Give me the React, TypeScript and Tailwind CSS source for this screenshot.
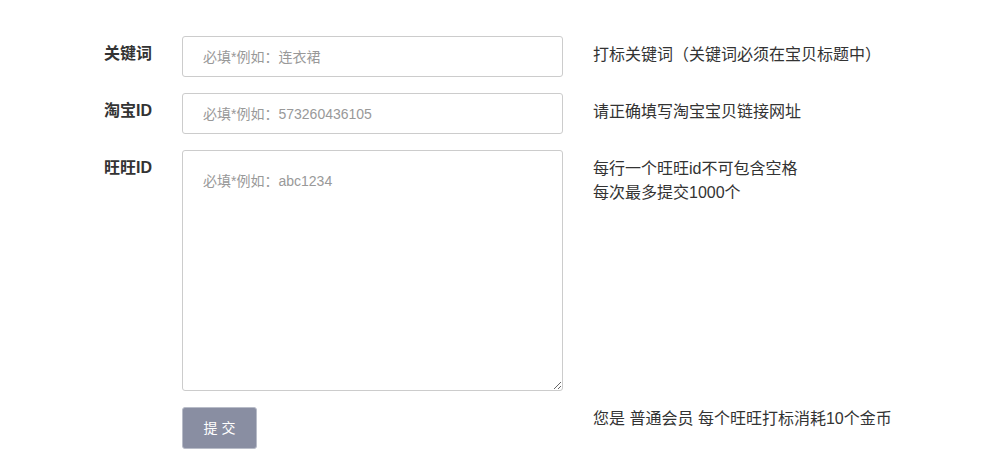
export default function App() {
  const font = { fontFamily: '"Liberation Sans", "Noto Sans CJK SC", sans-serif' };
  return (
    <div className="min-h-screen bg-white text-[#333]" style={font}>
      <div className="grid grid-cols-[152px_381px_auto] gap-x-[30px] gap-y-[16px] pt-[36px]">
        <div className="pt-[6px] text-right text-[16px] leading-6 font-bold">关键词</div>
        <input
          className="h-[41px] rounded-[3px] border border-[#ccc] pl-[20px] text-[14px] outline-none placeholder:text-[#999]"
          placeholder="必填*例如：连衣裙"
        />
        <div className="pt-[7px] text-[16px] leading-6">打标关键词（关键词必须在宝贝标题中）</div>

        <div className="pt-[6px] text-right text-[16px] leading-6 font-bold">淘宝ID</div>
        <input
          className="h-[41px] rounded-[3px] border border-[#ccc] pl-[20px] text-[14px] outline-none placeholder:text-[#999]"
          placeholder="必填*例如：573260436105"
        />
        <div className="pt-[7px] text-[16px] leading-6">请正确填写淘宝宝贝链接网址</div>

        <div className="pt-[6px] text-right text-[16px] leading-6 font-bold">旺旺ID</div>
        <textarea
          className="h-[241px] rounded-[3px] border border-[#ccc] pl-[20px] pt-[20px] text-[14px] leading-5 outline-none placeholder:text-[#999]"
          placeholder="必填*例如：abc1234"
        />
        <div className="pt-[7px] text-[16px] leading-6">
          <div>每行一个旺旺id不可包含空格</div>
          <div>每次最多提交1000个</div>
        </div>

        <div />
        <div>
          <button className="h-[42px] w-[75px] rounded-[3px] border border-[#b8bcc8] bg-[#898ea2] text-[14px] text-white">
            提 交
          </button>
        </div>
        <div className="text-[16px] leading-6">您是 普通会员 每个旺旺打标消耗10个金币</div>
      </div>
    </div>
  );
}
